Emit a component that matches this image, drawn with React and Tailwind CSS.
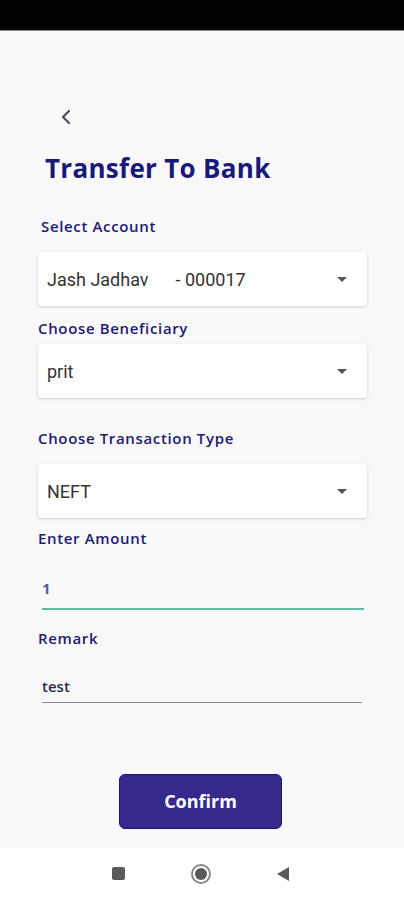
import { ChevronLeft } from "lucide-react";

const labelCls = "text-[15px] font-semibold text-[#1f1a72] leading-none tracking-[0.65px]";
const font = { fontFamily: "'Open Sans', Lato, sans-serif" };

function Dropdown({ children }) {
  return (
    <div className="mx-[38px] w-[329px] h-[54px] bg-white rounded-[4px] shadow-[0_1px_3px_rgba(0,0,0,0.18)] flex items-center pl-[9px] pr-[20px]">
      <div className="flex-1 text-[18px] text-[#333] font-['Roboto',sans-serif]">{children}</div>
      <span className="w-0 h-0 border-l-[5px] border-r-[5px] border-t-[5px] border-l-transparent border-r-transparent border-t-[#555]" />
    </div>
  );
}

export default function App() {
  return (
    <div className="w-[404px] h-[900px] flex flex-col bg-[#f9f9fa]" style={font}>
      <div className="h-[31px] bg-black border-b border-[#888] shrink-0" />

      <div className="flex-1 flex flex-col">
        <div className="pt-[74px] pl-[54px] h-[121px]">
          <ChevronLeft size={24} strokeWidth={2.2} className="text-[#4a4f5e]" />
        </div>
        <h1 className="pl-[45px] mt-[3px] text-[26px] font-bold text-[#1a1878] leading-none tracking-[0.3px]">
          Transfer To Bank
        </h1>

        <div className={`${labelCls} pl-[41px] mt-[38px]`}>Select Account</div>
        <div className="mt-[18px]">
          <Dropdown>
            <span>Jash Jadhav</span>
            <span className="ml-[27px]">- 000017</span>
          </Dropdown>
        </div>

        <div className={`${labelCls} pl-[38px] mt-[15px]`}>Choose Beneficiary</div>
        <div className="mt-[8px]">
          <Dropdown>prit</Dropdown>
        </div>

        <div className={`${labelCls} pl-[38px] mt-[33px]`}>Choose Transaction Type</div>
        <div className="mt-[18px]">
          <Dropdown>NEFT</Dropdown>
        </div>

        <div className={`${labelCls} pl-[38px] mt-[13px]`}>Enter Amount</div>
        <div className="mx-[42px] mt-[35px] w-[322px] border-b-2 border-[#5db9a3] pb-[12px] text-[15px] font-bold text-[#5b5a9a] leading-none">
          1
        </div>

        <div className={`${labelCls} pl-[38px] mt-[21px]`}>Remark</div>
        <div className="mx-[42px] mt-[33px] w-[320px] border-b border-[#8a8a8a] pb-[8px] text-[15px] font-semibold text-[#2a2a4a] leading-none">
          test
        </div>

        <div className="flex justify-center mt-[71px] pr-[3px]">
          <button className="w-[163px] h-[55px] rounded-[6px] bg-[#35298c] border border-[#1e1670] text-white text-[18px] font-bold">
            Confirm
          </button>
        </div>
      </div>

      <div className="h-[53px] bg-white flex items-center justify-center gap-[66px] shrink-0 pr-[3px]">
        <span className="w-[13px] h-[13px] bg-[#5a5a5a] rounded-[2px]" />
        <span className="w-[20px] h-[20px] rounded-full border-[2px] border-[#888] flex items-center justify-center">
          <span className="w-[12px] h-[12px] rounded-full bg-[#5a5a5a]" />
        </span>
        <svg width="13" height="14" viewBox="0 0 13 14">
          <path d="M12 0 L0 7 L12 14 Z" fill="#5a5a5a" />
        </svg>
      </div>
    </div>
  );
}
